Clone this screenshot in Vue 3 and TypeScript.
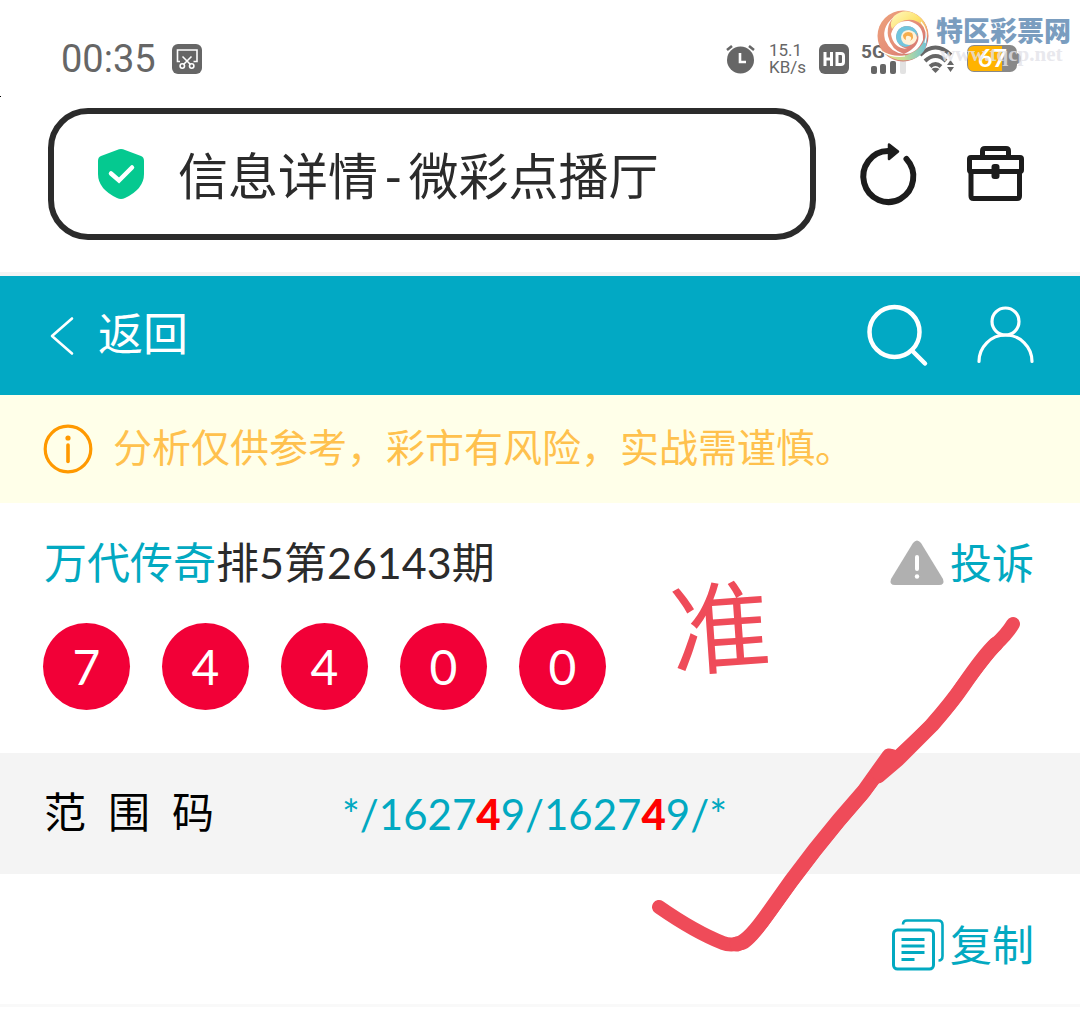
<script setup lang="ts">
interface CodePart {
  text: string
  hit: boolean
}

const balls: number[] = [7, 4, 4, 0, 0]
const labelChars: string[] = ['范', '围', '码']
const code: CodePart[] = [
  { text: '*/1627', hit: false },
  { text: '4', hit: true },
  { text: '9/1627', hit: false },
  { text: '4', hit: true },
  { text: '9/*', hit: false },
]
</script>

<template>
  <div class="page">
    <div class="status">
      <span class="clock">00:35</span>
      <svg class="shot" width="30" height="30" viewBox="0 0 30 30">
        <rect width="30" height="30" rx="6" fill="#666" />
        <g fill="none" stroke="#fff" stroke-width="1.6">
          <path d="M8 17.500H5.500V6H25V17.500H21.500" />
          <path d="M10.500 12.500L18.500 20.500M19.500 12.500L11.500 20.500" />
          <circle cx="10.300" cy="22" r="2.200" />
          <circle cx="19.700" cy="22" r="2.200" />
        </g>
      </svg>
      <div class="tray">
        <svg width="29" height="30" viewBox="0 0 29 30">
          <circle cx="14.500" cy="16" r="13.500" fill="#666" />
          <path d="M1 6L6 2M28 6L23 2" stroke="#666" stroke-width="2.600" />
          <path d="M14 9V18H20" fill="none" stroke="#fff" stroke-width="2.600" />
        </svg>
        <div class="speed"><span>15.1</span><span>KB/s</span></div>
        <svg width="30" height="30" viewBox="0 0 30 30">
          <rect width="30" height="30" rx="6" fill="#666" />
          <path d="M6 8V22M12.500 8V22M6 15H12.500M18 9.500H22Q24.500 9.500 24.500 12V18Q24.500 20.500 22 20.500H18Z" fill="none" stroke="#fff" stroke-width="3" />
        </svg>
        <svg width="46" height="32" viewBox="0 0 46 32">
          <text x="0" y="15" class="net">5G</text>
          <g fill="#666">
            <rect x="10" y="23" width="6" height="8" rx="2" />
            <rect x="19" y="21" width="6" height="10" rx="2" />
            <rect x="29" y="18" width="6" height="13" rx="2" />
          </g>
          <rect x="39" y="15" width="6" height="16" rx="2" fill="#e2e2e2" />
        </svg>
        <svg width="36" height="30" viewBox="0 0 36 30">
          <g fill="none" stroke="#666" stroke-width="4">
            <path d="M1 11Q16.500 -4 32 11" />
            <path d="M6 17Q16.500 7 27 17" />
            <path d="M11 22.500Q16.500 17.500 22 22.500" />
          </g>
          <path d="M12.500 25Q16.500 22.500 20.500 25L16.500 29Z" fill="#666" />
          <path d="M28 21L31.500 16L35 21ZM28 23L31.500 28L35 23Z" fill="#666" />
        </svg>
        <svg width="54" height="28" viewBox="0 0 54 28">
          <rect width="50" height="27" rx="7" fill="#888" />
          <path d="M50 8Q54 9 54 13.500T50 19Z" fill="#888" />
          <path d="M7 1H35V26H7Q1 26 1 20V7Q1 1 7 1Z" fill="#ffb300" />
          <text x="11" y="22" class="level">67</text>
        </svg>
      </div>
    </div>

    <div class="toolbar">
      <button class="address" type="button">
        <svg width="46" height="50" viewBox="0 0 46 50">
          <path d="M19 1Q23 -1 27 1L43 7Q46 8 46 12V25Q46 40 27 49Q23 51 19 49Q0 40 0 25V12Q0 8 3 7Z" fill="#05c990" />
          <path d="M13 24.500L21 31.500L34 18.500" fill="none" stroke="#fff" stroke-width="4.500" stroke-linecap="round" />
        </svg>
        <span class="title">信息详情<span class="dash">-</span>微彩点播厅</span>
      </button>
      <button class="tool" type="button" aria-label="刷新">
        <svg width="56" height="62" viewBox="0 0 56 62">
          <path d="M28 8A25 25.500 0 1 0 46.500 16" fill="none" stroke="#1c1c1c" stroke-width="6" stroke-linecap="round" />
          <path d="M29 1.500L38 8.500L29 16Z" fill="#1c1c1c" stroke="#1c1c1c" stroke-width="2.500" stroke-linejoin="round" />
        </svg>
      </button>
      <button class="tool" type="button" aria-label="工具箱">
        <svg width="58" height="56" viewBox="0 0 58 56">
          <g fill="none" stroke="#1c1c1c" stroke-width="5" stroke-linejoin="round">
            <path d="M16.500 11V5Q16.500 2.500 19 2.500H40Q42.500 2.500 42.500 5V11" />
            <rect x="3.500" y="11.500" width="52" height="14" rx="1.500" />
            <path d="M5 26V50Q5 52.500 7.500 52.500H51Q53.500 52.500 53.500 50V26" />
          </g>
          <rect x="25.500" y="18" width="8" height="15" rx="3" fill="#1c1c1c" />
        </svg>
      </button>
    </div>

    <header class="nav">
      <button class="back" type="button">
        <svg width="24" height="38" viewBox="0 0 24 38">
          <path d="M22 1.500L2 19L22 36.500" fill="none" stroke="#fff" stroke-width="2.600" stroke-linecap="round" stroke-linejoin="round" />
        </svg>
        <span>返回</span>
      </button>
      <div class="actions">
        <button type="button" aria-label="搜索">
          <svg width="62" height="62" viewBox="0 0 62 62">
            <circle cx="28.500" cy="27" r="25" fill="none" stroke="#fff" stroke-width="4.500" />
            <path d="M46 45.500L59 58.500" stroke="#fff" stroke-width="4.500" stroke-linecap="round" />
          </svg>
        </button>
        <button type="button" aria-label="我的">
          <svg width="58" height="60" viewBox="0 0 58 60">
            <circle cx="29.500" cy="15.500" r="13.500" fill="none" stroke="#fff" stroke-width="3.200" />
            <path d="M3 55.500A26.500 26.500 0 0 1 56 55.500" fill="none" stroke="#fff" stroke-width="3.200" stroke-linecap="round" />
          </svg>
        </button>
      </div>
    </header>

    <div class="notice">
      <svg width="50" height="50" viewBox="0 0 50 50">
        <circle cx="25" cy="25" r="22.800" fill="none" stroke="#ff9900" stroke-width="3.200" />
        <circle cx="25" cy="14" r="2.600" fill="#ff9900" />
        <path d="M25 21V37.500" stroke="#ff9900" stroke-width="3.600" stroke-linecap="round" />
      </svg>
      <span>分析仅供参考，彩市有风险，实战需谨慎。</span>
    </div>

    <main>
      <section class="draw">
        <div class="heading">
          <h1><a href="#">万代传奇</a>排5第26143期</h1>
          <a class="report" href="#">
            <svg width="54" height="46" viewBox="0 0 54 46">
              <path d="M23 3Q27 -2 31 3L53 39Q55 45 49 45H5Q-1 45 1 39Z" fill="#b0b0b0" />
              <path d="M27 17V29" stroke="#fff" stroke-width="4" stroke-linecap="round" />
              <circle cx="27" cy="36.500" r="2.200" fill="#fff" />
            </svg>
            <span>投诉</span>
          </a>
        </div>
        <div class="balls">
          <span v-for="(n, i) in balls" :key="i" class="ball">{{ n }}</span>
        </div>
      </section>

      <dl class="range">
        <dt><span v-for="c in labelChars" :key="c">{{ c }}</span></dt>
        <dd><template v-for="(p, i) in code" :key="i"><b v-if="p.hit">{{ p.text }}</b><span v-else>{{ p.text }}</span></template></dd>
      </dl>

      <div class="footer">
        <button class="copy" type="button">
          <svg width="52" height="52" viewBox="0 0 52 52" fill="none" stroke="#02a9c1">
            <rect x="1.500" y="11" width="40" height="39" rx="4" stroke-width="3" />
            <path d="M11 5.500Q11 1.500 15 1.500H46Q50.500 1.500 50.500 6V37Q50.500 41.500 46.500 41.500" stroke-width="2.600" />
            <path d="M9.500 20.500H32.500M9.500 27H32.500M9.500 33.500H32.500M9.500 40.500H22.500" stroke-width="3" />
          </svg>
          <span>复制</span>
        </button>
      </div>
    </main>

    <span class="speck"></span>
    <span class="stamp">准</span>
    <svg class="tick" width="380" height="344" viewBox="0 0 380 344" fill="none" stroke="#ef4b59" stroke-width="14" stroke-linecap="round" stroke-linejoin="round">
      <path d="M9 297Q45 322 73 333Q80 336 92 333Q99 331 118 304Q165 237 212 184L240 147L229 165L280 117Q302 93 312 77Q335 46 345 35Q357 24 363 14" />
      <path d="M87 334Q98 332 119 302Q163 238 214 181L239 146M228 166L248 149L282 115Q302 92 313 76Q335 44 346 34" stroke-width="15" />
      <path d="M228 163L242 146L246 150Z" />
    </svg>

    <div class="brand">
      <svg width="52" height="52" viewBox="0 0 52 52">
        <defs>
          <linearGradient id="swirl" x1="0" y1="0" x2="1" y2="1">
            <stop offset="0" stop-color="#eda27c" />
            <stop offset="0.500" stop-color="#e58f78" />
            <stop offset="1" stop-color="#c9656c" />
          </linearGradient>
          <linearGradient id="sun" x1="0" y1="0" x2="1" y2="1">
            <stop offset="0" stop-color="#fff9c4" />
            <stop offset="0.500" stop-color="#fde36c" />
            <stop offset="1" stop-color="#e98d6c" />
          </linearGradient>
          <linearGradient id="sea" x1="0" y1="0" x2="1" y2="0">
            <stop offset="0" stop-color="#f4dc7e" />
            <stop offset="0.500" stop-color="#c6de93" />
            <stop offset="1" stop-color="#6fc2d6" />
          </linearGradient>
        </defs>
        <circle cx="26" cy="26" r="25.500" fill="url(#swirl)" />
        <path d="M17 6Q28 -3 40 5Q52 13 51 29Q48 13 36 10Q24 8 15 19Q12 13 17 6Z" fill="url(#sun)" />
        <path d="M3 39Q15 49 30 45Q47 39 49 23Q53 40 39 48Q19 56 3 39Z" fill="url(#sea)" />
        <path d="M20 5Q9 12 11 26Q14 40 27 44Q14 43 8 30Q4 15 20 5Z" fill="#fff" />
        <path d="M14 24Q18 10 32 11Q47 15 46 30Q40 44 27 44Q44 36 41 24Q37 15 28 16Q20 18 19 27Q20 36 30 39Q16 38 14 24Z" fill="#fff" />
        <path d="M19 26Q20 17 29 16Q40 16 41 27Q37 20 30 21Q24 25 27 31Q30 35 35 34Q28 40 22 34Q19 31 19 26Z" fill="#72c5dd" />
        <path d="M24 27Q25 20 32 20Q39 21 40 28Q38 35 32 35Q24 34 24 27Z" fill="#fff2d8" />
        <path d="M26 25Q29 20 35 23Q38 28 33 31Q36 27 32 26Q28 25 29 30Q26 29 26 25Z" fill="#f6ad4c" />
        <path d="M4 41Q15 48 28 46M44 12Q52 21 48 33" fill="none" stroke="#fff" stroke-width="1.200" />
      </svg>
      <div class="words">
        <strong>特区彩票网</strong>
        <span>www.tqcp.net</span>
      </div>
    </div>
  </div>
</template>

<style>
body {
  margin: 0;
  background: #fff;
}
</style>

<style scoped>
.page {
  position: relative;
  overflow: hidden;
  font-family: Lato, "Noto Sans CJK SC", sans-serif;
  color: #2b2b2b;
}
svg {
  display: block;
  flex: none;
  overflow: visible;
}
button {
  padding: 0;
  border: 0;
  background: none;
  color: inherit;
  font: inherit;
  cursor: pointer;
}
a {
  color: #02a9c1;
  text-decoration: none;
}
.status {
  display: flex;
  align-items: center;
  height: 44px;
  padding: 37px 59px 27px 61px;
  color: #666;
  font-family: Roboto, sans-serif;
}
.clock {
  font-size: 38px;
  line-height: 44px;
}
.shot {
  margin-left: 16px;
}
.tray {
  display: flex;
  align-items: center;
  gap: 12px;
  margin-left: auto;
}
.speed {
  display: flex;
  flex-direction: column;
  width: 38px;
  margin-left: 2px;
  font-size: 17px;
  line-height: 17px;
}
.net {
  font: bold 19px Roboto, sans-serif;
  fill: #666;
}
.level {
  font: bold 25px Lato, sans-serif;
  fill: #fff;
}
.toolbar {
  display: flex;
  align-items: center;
  gap: 44px;
  padding: 0 56px 32px 48px;
  border-bottom: 4px solid #f4f4f4;
}
.address {
  display: flex;
  flex: 1;
  align-items: center;
  gap: 34px;
  height: 132px;
  padding: 0 44px;
  border: 6px solid #2b2b2b;
  border-radius: 40px;
  text-align: left;
}
.title {
  padding-top: 4px;
  font-size: 50px;
  line-height: 60px;
  white-space: nowrap;
}
.dash {
  margin: 0 6px;
}
.tool + .tool {
  margin-left: 6px;
}
.nav {
  display: flex;
  align-items: center;
  justify-content: space-between;
  height: 119px;
  padding: 0 46px 0 50px;
  background: #02a9c4;
  color: #fff;
}
.back {
  display: flex;
  align-items: center;
  gap: 24px;
  font-size: 45px;
  line-height: 56px;
}
.back span,
.notice span {
  padding-bottom: 4px;
}
.actions {
  display: flex;
  align-items: center;
  gap: 48px;
}
.notice {
  display: flex;
  align-items: center;
  gap: 20px;
  min-height: 108px;
  padding: 0 43px;
  background: #ffffe9;
  color: #ffc14d;
  font-size: 39px;
  line-height: 52px;
}
.draw {
  padding: 31px 46px 43px 44px;
}
.heading {
  display: flex;
  align-items: center;
  justify-content: space-between;
  height: 58px;
}
h1 {
  margin: 0;
  font-size: 43px;
  font-weight: normal;
  line-height: 56px;
}
.report,
.copy {
  display: flex;
  align-items: center;
  gap: 6px;
  color: #02a9c1;
  font-size: 42px;
  line-height: 56px;
}
.balls {
  display: flex;
  gap: 32px;
  margin: 31px 0 0 -1px;
}
.ball {
  width: 87px;
  border-radius: 50%;
  background: #f20037;
  color: #fff;
  font-size: 48px;
  line-height: 87px;
  text-align: center;
}
.range {
  display: flex;
  align-items: center;
  min-height: 121px;
  margin: 0;
  padding: 0 44px;
  background: #f4f4f4;
  font-size: 42px;
  line-height: 56px;
}
dt {
  display: flex;
  gap: 22px;
  width: 298px;
  padding-bottom: 4px;
  color: #000;
}
dd {
  margin: 0;
  color: #02a9c1;
}
dd b {
  color: #f00;
  font-weight: 900;
}
.footer {
  display: flex;
  justify-content: flex-end;
  padding: 43px 46px 31px;
  border-bottom: 3px solid #f9f9f9;
}
.speck {
  position: absolute;
  top: 96px;
  left: 0;
  width: 1px;
  height: 1px;
  background: #000;
}
.stamp {
  position: absolute;
  top: 571px;
  left: 670px;
  color: #ef4b59;
  font-size: 100px;
  line-height: 110px;
  transform: rotate(-4deg);
}
.tick {
  position: absolute;
  top: 610px;
  left: 650px;
  pointer-events: none;
}
.brand {
  position: absolute;
  top: 10px;
  right: 9px;
  display: flex;
  gap: 7px;
}
.words {
  display: flex;
  flex-direction: column;
}
.words strong {
  color: #7a9dbf;
  font-size: 27px;
  font-weight: 900;
  line-height: 42px;
}
.words span {
  margin-top: -10px;
  padding-left: 4px;
  color: rgba(226, 226, 232, 0.8);
  font: bold 21px/24px "Liberation Serif", serif;
}
</style>
